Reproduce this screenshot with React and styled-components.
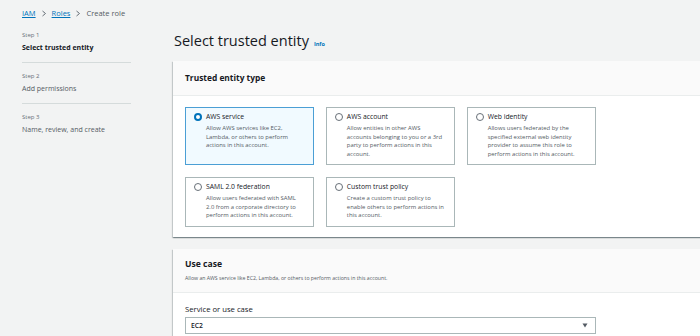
import React from 'react';
import styled, { createGlobalStyle } from 'styled-components';

const GlobalStyle = createGlobalStyle`
  html, body {
    margin: 0;
    padding: 0;
    background: #f2f3f3;
    overflow: hidden;
  }
  body {
    font-family: "Open Sans", "Noto Sans", Arial, sans-serif;
    color: #16191f;
  }
`;

const Page = styled.div`
  width: 700px;
  height: 336px;
  overflow: hidden;
  padding: 6px 0 0 22px;
  box-sizing: border-box;
`;

const Crumbs = styled.nav`
  display: flex;
  align-items: center;
  gap: 5px;
  height: 14px;
  font-size: 7.5px;
  color: #545b64;
`;

const CrumbLink = styled.a`
  color: #0073bb;
  text-decoration: underline;
`;

const Layout = styled.div`
  display: grid;
  grid-template-columns: 109px 540px;
  column-gap: 42px;
  margin-top: 8px;
`;

const Steps = styled.ol`
  list-style: none;
  margin: 0;
  padding: 2px 0 0;
`;

const Step = styled.li`
  padding: 8px 0;
  border-bottom: 1px solid #d5dbdb;
  &:first-child {
    padding-top: 0;
  }
  &:last-child {
    border-bottom: none;
  }
`;

const StepLabel = styled.div`
  font-size: 6px;
  line-height: 10px;
  color: #687078;
`;

const StepTitle = styled.div`
  margin-top: 2px;
  font-size: 7px;
  line-height: 12px;
  font-weight: ${p => (p.$active ? 700 : 400)};
  color: ${p => (p.$active ? '#16191f' : '#545b64')};
  white-space: nowrap;
`;

const Main = styled.main`
  display: flex;
  flex-direction: column;
`;

const TitleRow = styled.div`
  display: flex;
  align-items: baseline;
  gap: 5px;
  height: 24px;
  margin: 1px 0 8px 1px;
`;

const Title = styled.h1`
  margin: 0;
  font-size: 14.5px;
  line-height: 24px;
  font-weight: 400;
  color: #16191f;
`;

const Info = styled.a`
  font-size: 5.5px;
  font-weight: 700;
  color: #0073bb;
`;

const Card = styled.section`
  background: #fff;
  box-shadow: 0 1px 1px 0 rgba(0, 28, 36, 0.3), 1px 1px 1px 0 rgba(0, 28, 36, 0.15),
    -1px 1px 1px 0 rgba(0, 28, 36, 0.15);
  & + & {
    margin-top: 12px;
  }
`;

const CardHeader = styled.header`
  padding: ${p => (p.$tall ? '9px 12px' : '10px 12px')};
  background: #fafafa;
  border-bottom: 1px solid #eaeded;
`;

const CardTitle = styled.h2`
  margin: 0;
  font-size: ${p => (p.$big ? '8.6px' : '8.4px')};
  line-height: ${p => (p.$big ? '12px' : '14px')};
  font-weight: 700;
  color: #16191f;
`;

const CardSub = styled.p`
  margin: 3px 0 0;
  font-size: 5.2px;
  line-height: 10px;
  color: #545b64;
`;

const CardBody = styled.div`
  padding: 11px 12px 10px;
`;

const Tiles = styled.div`
  display: grid;
  grid-template-columns: repeat(3, 1fr);
  column-gap: 11.5px;
  row-gap: 12px;
  width: 411px;
`;

const Tile = styled.label`
  display: grid;
  grid-template-columns: 8px 1fr;
  align-content: start;
  column-gap: 4px;
  padding: 4px 8px 6px;
  border: 1px solid ${p => (p.$selected ? '#4b9fd5' : '#aab7b8')};
  background: ${p => (p.$selected ? '#f1faff' : '#fff')};
`;

const Radio = styled.span`
  align-self: center;
  box-sizing: border-box;
  width: 8px;
  height: 8px;
  border-radius: 50%;
  border: ${p => (p.$checked ? '2.2px solid #0073bb' : '1px solid #687078')};
  background: #fff;
`;

const TileTitle = styled.span`
  font-size: 6.8px;
  line-height: 10px;
  color: #16191f;
`;

const TileDesc = styled.span`
  grid-column: 2;
  margin-top: 2px;
  font-size: 5.9px;
  line-height: 8.5px;
  color: #545b64;
`;

const FieldLabel = styled.div`
  font-size: 7.7px;
  line-height: 10px;
  color: #16191f;
  margin-bottom: 3px;
`;

const Select = styled.div`
  display: flex;
  align-items: center;
  justify-content: space-between;
  box-sizing: border-box;
  width: 411px;
  height: 17px;
  padding: 0 7px 0 5px;
  border: 1px solid #aab7b8;
  background: #fff;
  font-size: 6.8px;
  font-weight: 600;
  color: #16191f;
`;

const Chevron = () => (
  <svg width="6" height="7" viewBox="0 0 6 7">
    <path d="M1.5 1 L4.5 3.5 L1.5 6" fill="none" stroke="#687078" strokeWidth="1" />
  </svg>
);

const Caret = () => (
  <svg width="6" height="5" viewBox="0 0 6 5">
    <path d="M0.5 0.5 H5.5 L3 4.5 Z" fill="#545b64" />
  </svg>
);

const tiles = [
  {
    title: 'AWS service',
    desc: 'Allow AWS services like EC2, Lambda, or others to perform actions in this account.',
    selected: true,
  },
  {
    title: 'AWS account',
    desc: 'Allow entities in other AWS accounts belonging to you or a 3rd party to perform actions in this account.',
  },
  {
    title: 'Web identity',
    desc: 'Allows users federated by the specified external web identity provider to assume this role to perform actions in this account.',
  },
  {
    title: 'SAML 2.0 federation',
    desc: 'Allow users federated with SAML 2.0 from a corporate directory to perform actions in this account.',
  },
  {
    title: 'Custom trust policy',
    desc: 'Create a custom trust policy to enable others to perform actions in this account.',
  },
];

const steps = [
  { label: 'Step 1', title: 'Select trusted entity', active: true },
  { label: 'Step 2', title: 'Add permissions' },
  { label: 'Step 3', title: 'Name, review, and create' },
];

export default function App() {
  return (
    <Page>
      <GlobalStyle />
      <Crumbs>
        <CrumbLink>IAM</CrumbLink>
        <Chevron />
        <CrumbLink>Roles</CrumbLink>
        <Chevron />
        <span>Create role</span>
      </Crumbs>
      <Layout>
        <Steps>
          {steps.map(s => (
            <Step key={s.label}>
              <StepLabel>{s.label}</StepLabel>
              <StepTitle $active={s.active}>{s.title}</StepTitle>
            </Step>
          ))}
        </Steps>
        <Main>
          <TitleRow>
            <Title>Select trusted entity</Title>
            <Info>Info</Info>
          </TitleRow>
          <Card>
            <CardHeader>
              <CardTitle>Trusted entity type</CardTitle>
            </CardHeader>
            <CardBody>
              <Tiles>
                {tiles.map(t => (
                  <Tile key={t.title} $selected={t.selected}>
                    <Radio $checked={t.selected} />
                    <TileTitle>{t.title}</TileTitle>
                    <TileDesc>{t.desc}</TileDesc>
                  </Tile>
                ))}
              </Tiles>
            </CardBody>
          </Card>
          <Card>
            <CardHeader $tall>
              <CardTitle $big>Use case</CardTitle>
              <CardSub>Allow an AWS service like EC2, Lambda, or others to perform actions in this account.</CardSub>
            </CardHeader>
            <CardBody>
              <FieldLabel>Service or use case</FieldLabel>
              <Select>
                <span>EC2</span>
                <Caret />
              </Select>
            </CardBody>
          </Card>
        </Main>
      </Layout>
    </Page>
  );
}
